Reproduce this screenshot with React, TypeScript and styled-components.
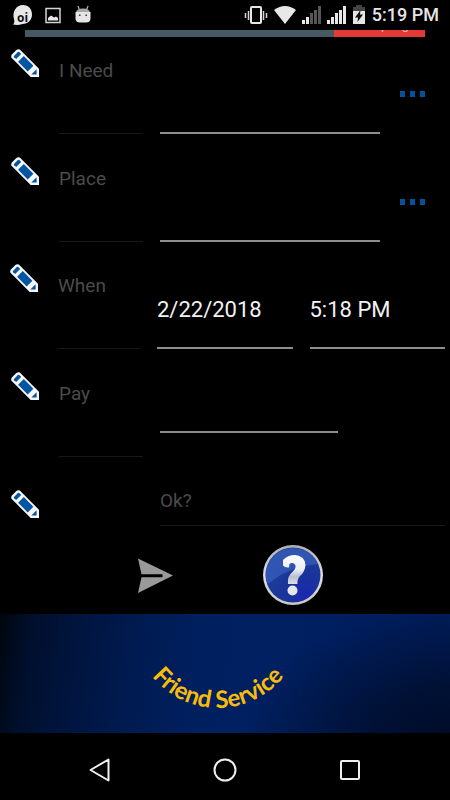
import React from "react";
import styled, { createGlobalStyle } from "styled-components";

const GlobalStyle = createGlobalStyle`
  * { box-sizing: border-box; }
  body { margin: 0; background: #000; font-family: Roboto, sans-serif; }
  button, input { font: inherit; color: inherit; }
`;

const Screen = styled.div`
  display: flex;
  flex-direction: column;
  min-height: 100vh;
  background: #000;
  color: #fff;
`;

const StatusBar = styled.header`
  display: flex;
  justify-content: space-between;
  align-items: center;
  height: 30px;
  padding: 0 11px 0 12px;
`;

const StatusGroup = styled.div<{ $gap: number }>`
  display: flex;
  align-items: center;
  gap: ${(p) => p.$gap}px;
`;

const Clock = styled.time`
  font-size: 18px;
  line-height: 30px;
  font-weight: 500;
  color: #e6e6e6;
`;

const Banner = styled.div`
  display: flex;
  align-items: flex-end;
  height: 7px;
  margin: 0 25px 4px;
  overflow: hidden;
  background: #455a64;
`;

const BannerAction = styled.button`
  width: 91px;
  margin-left: auto;
  padding: 0 16px 4px 0;
  border: 0;
  background: #e53935;
  color: #f6b8b6;
  font-size: 13px;
  line-height: 16px;
  text-align: right;
`;

const Form = styled.form`
  display: flex;
  flex-direction: column;
`;

const Rows = styled.div`
  display: grid;
  grid-template-columns: minmax(0, 1fr);
  grid-auto-rows: 1fr;
  min-height: 430px;
`;

const Row = styled.div<{ $left?: number; $right?: number }>`
  display: flex;
  align-items: flex-start;
  padding: 0 ${(p) => p.$right ?? 25}px 0 ${(p) => p.$left ?? 11}px;
`;

const EditButton = styled.button<{ $top?: number }>`
  flex: none;
  width: 28px;
  height: 28px;
  margin: ${(p) => p.$top ?? 8}px 20px 0 0;
  padding: 0;
  border: 0;
  background: none;
  svg { display: block; }
`;

const Label = styled.label<{ $narrow?: boolean }>`
  flex: none;
  width: ${(p) => (p.$narrow ? 82 : 84)}px;
  height: 93px;
  margin-right: 17px;
  padding-top: 18px;
  border-bottom: 1px solid #181818;
  color: #4b4b4b;
  font-size: 19px;
  line-height: 24px;
`;

const Fields = styled.div`
  flex: 1;
  min-width: 0;
  display: flex;
  gap: 17px;
`;

const Field = styled.input<{ $size?: "pay" | "hint" }>`
  flex: ${(p) => (p.$size === "pay" ? "0 1 178px" : "1 1 0")};
  width: 0;
  min-width: 0;
  height: ${(p) => (p.$size === "pay" ? 69 : p.$size === "hint" ? 55 : 93)}px;
  padding: ${(p) => (p.$size === "hint" ? "4px 0 0" : "16px 0 0")};
  border: 0;
  border-bottom: ${(p) => (p.$size === "hint" ? "1px solid #181818" : "2px solid #8e8e8e")};
  border-radius: 0;
  outline: 0;
  background: transparent;
  color: #f2f2f2;
  font-size: ${(p) => (p.$size === "hint" ? 19 : 22)}px;
  &::placeholder { color: #4b4b4b; opacity: 1; }
`;

const MoreButton = styled.button`
  flex: none;
  display: flex;
  gap: 5px;
  margin: 50px 0 0 20px;
  padding: 0;
  border: 0;
  background: none;
`;

const Dot = styled.span`
  width: 5px;
  height: 6px;
  background: #04529d;
`;

const ConfirmRow = styled(Row)`
  height: 71px;
`;

const ConfirmSpacer = styled.div`
  flex: none;
  width: 101px;
`;

const Actions = styled.div`
  display: flex;
  justify-content: center;
  align-items: center;
  gap: 90px;
  height: 72px;
  padding: 0 0 6px 10px;
`;

const ActionButton = styled.button`
  padding: 0;
  border: 0;
  background: none;
  svg { display: block; }
`;

const Footer = styled.footer`
  display: flex;
  justify-content: center;
  height: 119px;
  padding-right: 14px;
  background:
    radial-gradient(ellipse 220px 135px at 102% 108%, #000c26 0%, rgba(0, 13, 42, 0.8) 38%, rgba(0, 30, 92, 0) 100%),
    linear-gradient(98deg, #00060f 0%, #000f2c 7%, #00143c 16%, #001a4e 28%, #001f5e 43%, #002062 60%, #001c58 100%);
`;

const NavBar = styled.nav`
  flex: 1;
  display: flex;
  justify-content: center;
  align-items: center;
  gap: 101px;
  min-height: 67px;
  padding-top: 7px;
`;

const Pencil = () => (
  <svg width="28" height="28" viewBox="0 0 28 28" aria-hidden="true">
    <path d="M8.800 0.500 28 19.700V28H19.700L0.500 8.800Q-.3 7 .9 5.500L5.400.9Q7-.4 8.800.5Z" fill="#f6f8fa" />
    <path d="M3 7Q2.500 7.600 3.100 8.300L5.200 10.100 10.200 5.100 8.300 3.100Q7.500 2.500 6.800 3.100Z" fill="#0455a4" />
    <path d="M12.800 7.100 22.400 16.700 16.700 22.400 7.100 12.800Z" fill="#0455a4" />
    <path d="M25.600 20.300V25.600H20.300Z" fill="#0455a4" />
  </svg>
);

const Edit = ({ name, top }: { name: string; top?: number }) => (
  <EditButton type="button" aria-label={`Edit ${name}`} $top={top}>
    <Pencil />
  </EditButton>
);

const More = ({ name }: { name: string }) => (
  <MoreButton type="button" aria-label={`More options for ${name}`}>
    <Dot />
    <Dot />
    <Dot />
  </MoreButton>
);

const Signal = ({ active }: { active: number }) => (
  <svg width="19" height="20" viewBox="0 0 19 20" aria-hidden="true">
    {[4, 7, 11, 14, 18].map((h, i) => (
      <rect key={h} x={i * 4} y={19 - h} width="3" height={h} fill={i < active ? "#e8e8e8" : "#565656"} />
    ))}
  </svg>
);

export default function App() {
  return (
    <Screen>
      <GlobalStyle />
      <StatusBar>
        <StatusGroup $gap={12}>
          <svg width="21" height="22" viewBox="0 0 21 22" aria-hidden="true">
            <path d="M11 1C16.500 1 20 5 20 10.500S16 20 10.500 20Q6 21.500 1 20.500Q3 18.500 2 15C0 8 4 1 11 1Z" fill="#e8e8e8" />
            <text x="5" y="18" fontFamily="Open Sans" fontWeight="700" fontSize="12" fill="#111">oi</text>
          </svg>
          <svg width="16" height="17" viewBox="0 0 16 17" aria-hidden="true">
            <path d="M1 1.500H15V15.500H1Z" fill="none" stroke="#d5d5d5" strokeWidth="1.500" />
            <path d="M3 13.500V11L6 8.500 9 10.500 11 9.500 13 11V13.500Z" fill="#e8e8e8" />
          </svg>
          <svg width="20" height="20" viewBox="0 0 20 20" aria-hidden="true">
            <path d="M5 1 6.500 5M15 1 13.500 5" stroke="#aaa" strokeWidth="1.300" />
            <path d="M3 8Q3 3.500 10 3.500T17 8Z" fill="#a9a9a9" />
            <path d="M2.500 7H17.500V14Q17 17.500 13 17.500H7Q3 17.500 2.500 14Z" fill="#e6e6e6" />
            <path d="M6 9.500h1.500v1.500H6ZM12.500 9.500H14v1.500h-1.500Z" fill="#333" />
          </svg>
        </StatusGroup>
        <StatusGroup $gap={6}>
          <svg width="24" height="20" viewBox="0 0 24 20" aria-hidden="true">
            <rect x="7" y="2" width="10" height="16" rx="1" fill="none" stroke="#e8e8e8" strokeWidth="2" />
            <path d="M1.500 8V13M4.500 6V15M19.500 6V15M22.500 8V13" stroke="#d5d5d5" strokeWidth="1.500" />
          </svg>
          <svg width="22" height="20" viewBox="0 0 22 20" aria-hidden="true">
            <path d="M0 5Q11-3 22 5L11 19Z" fill="#e8e8e8" />
          </svg>
          <Signal active={2} />
          <Signal active={5} />
          <svg width="14" height="20" viewBox="3 0 14 20" aria-hidden="true">
            <path d="M7 0H13V2H16V7H4V2H7Z" fill="#444" />
            <path d="M4 6H16V19H4Z" fill="#e6e6e6" />
            <path d="M11.500 5 6 12.500H9L8.500 17 14 9.500H11Z" fill="#111" />
          </svg>
          <Clock>5:19 PM</Clock>
        </StatusGroup>
      </StatusBar>

      <Banner>
        <BannerAction type="button">Sampling</BannerAction>
      </Banner>

      <Form onSubmit={(e) => e.preventDefault()}>
        <Rows>
          <Row>
            <Edit name="need" />
            <Label htmlFor="need">I Need</Label>
            <Field id="need" />
            <More name="need" />
          </Row>
          <Row>
            <Edit name="place" />
            <Label htmlFor="place">Place</Label>
            <Field id="place" />
            <More name="place" />
          </Row>
          <Row $left={10} $right={5}>
            <Edit name="when" />
            <Label htmlFor="date" $narrow>When</Label>
            <Fields>
              <Field id="date" defaultValue="2/22/2018" />
              <Field aria-label="Time" defaultValue="5:18 PM" />
            </Fields>
          </Row>
          <Row>
            <Edit name="pay" />
            <Label htmlFor="pay">Pay</Label>
            <Field id="pay" $size="pay" />
          </Row>
        </Rows>
        <ConfirmRow $right={5}>
          <Edit name="confirmation" top={19} />
          <ConfirmSpacer />
          <Field aria-label="Confirmation" placeholder="Ok?" $size="hint" />
        </ConfirmRow>
        <Actions>
          <ActionButton type="submit" aria-label="Send">
            <svg width="36" height="36" viewBox="0 0 36 36" aria-hidden="true">
              <path d="M1 1.500 36 18.500 1 36 4.500 20.300H25.500V17.300H4.500Z" fill="#9a9a9a" />
            </svg>
          </ActionButton>
          <ActionButton type="button" aria-label="Help">
            <svg width="60" height="60" viewBox="0 0 60 60" aria-hidden="true">
              <defs>
                <linearGradient id="rim" x1="0" y1="0" x2="0" y2="1">
                  <stop offset="0" stopColor="#b0aeae" />
                  <stop offset=".5" stopColor="#e0dede" />
                  <stop offset="1" stopColor="#c9c7c8" />
                </linearGradient>
                <radialGradient id="ball" cx=".72" cy=".85" r=".85">
                  <stop offset="0" stopColor="#1a28b0" />
                  <stop offset=".4" stopColor="#1a339a" />
                  <stop offset="1" stopColor="#1c409c" />
                </radialGradient>
                <linearGradient id="mark" x1="0" y1="0" x2="0" y2="1">
                  <stop offset="0" stopColor="#fff" />
                  <stop offset=".5" stopColor="#eceef4" />
                  <stop offset=".75" stopColor="#b9bfd2" />
                  <stop offset="1" stopColor="#dcdee6" />
                </linearGradient>
              </defs>
              <circle cx="30" cy="30" r="30" fill="url(#rim)" />
              <circle cx="30" cy="30" r="27.500" fill="url(#ball)" />
              <path d="M2.500 31A27.500 27.500 0 0 1 55 19Q43 20 31 24T5 39Q3 35 2.500 31Z" fill="#3f66c2" opacity=".6" />
              <path d="M20 15Q25 10 32 10Q42 11 42.500 20Q42 27 37 31Q34 34 34.500 39H25Q24 31 29.500 27Q34 22.500 32 19.500Q29 17 26.500 19L26 22.500Q22 23 20 20.500Z" fill="url(#mark)" />
              <circle cx="29.500" cy="45.500" r="5" fill="#e6e7ee" />
            </svg>
          </ActionButton>
        </Actions>
      </Form>

      <Footer>
        <svg width="160" height="119" viewBox="0 0 160 119" role="img" aria-label="Friend Service">
          <path id="smile" d="M4 47A85 85 0 0 0 156 47" fill="none" />
          <text fill="#f8bd0a" fontFamily="Lato" fontWeight="700" fontSize="24" textAnchor="middle">
            <textPath href="#smile" startOffset="50%">Friend Service</textPath>
          </text>
        </svg>
      </Footer>

      <NavBar aria-label="System">
        <ActionButton type="button" aria-label="Back">
          <svg width="24" height="24" viewBox="0 0 24 24" aria-hidden="true">
            <path d="M20.500 1.500V22.500L2.500 12Z" fill="none" stroke="#f0f0f0" strokeWidth="2" strokeLinejoin="round" />
          </svg>
        </ActionButton>
        <ActionButton type="button" aria-label="Home">
          <svg width="24" height="24" viewBox="0 0 24 24" aria-hidden="true">
            <circle cx="12" cy="12" r="10.500" fill="none" stroke="#f0f0f0" strokeWidth="2" />
          </svg>
        </ActionButton>
        <ActionButton type="button" aria-label="Recent apps">
          <svg width="24" height="24" viewBox="0 0 24 24" aria-hidden="true">
            <rect x="3" y="3" width="18" height="18" rx="1" fill="none" stroke="#f0f0f0" strokeWidth="2" />
          </svg>
        </ActionButton>
      </NavBar>
    </Screen>
  );
}
